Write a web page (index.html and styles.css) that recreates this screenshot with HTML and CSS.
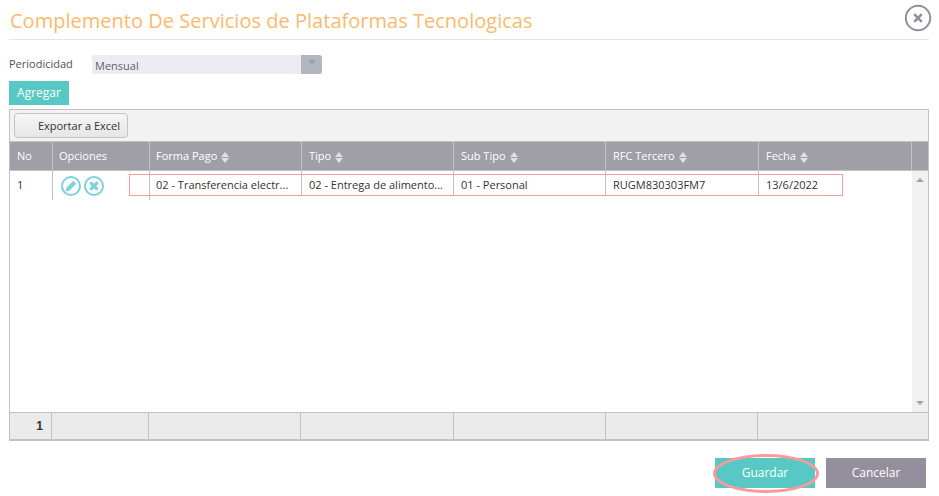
FILE: index.html
```html
<!DOCTYPE html>
<html lang="es">
<head>
<meta charset="utf-8">
<title>Complemento De Servicios de Plataformas Tecnologicas</title>
<link rel="stylesheet" href="styles.css">
</head>
<body>
<div class="dialog">
  <header class="head">
    <h1 class="title">Complemento De Servicios de Plataformas Tecnologicas</h1>
    <button class="close" aria-label="Cerrar">
      <svg width="28" height="28" viewBox="0 0 28 28"><circle cx="14" cy="14" r="12.2" fill="#fff" stroke="#928f9b" stroke-width="2"/><path d="M10.2 10.2l7.6 7.6M17.8 10.2l-7.6 7.6" stroke="#928f9b" stroke-width="2.6" fill="none"/></svg>
    </button>
  </header>
  <div class="field">
    <label class="label">Periodicidad</label>
    <div class="select"><span class="select-text">Mensual</span><span class="select-arrow"><i></i></span></div>
  </div>
  <button class="add">Agregar</button>
  <section class="grid">
    <div class="toolbar"><button class="excel">Exportar a Excel</button></div>
    <div class="row header">
      <div class="cell">No</div>
      <div class="cell tight">Opciones</div>
      <div class="cell tight">Forma Pago <span class="sort"></span></div>
      <div class="cell">Tipo <span class="sort"></span></div>
      <div class="cell">Sub Tipo <span class="sort"></span></div>
      <div class="cell">RFC Tercero <span class="sort"></span></div>
      <div class="cell">Fecha <span class="sort"></span></div>
      <div class="cell last"></div>
    </div>
    <div class="body">
      <div class="rows">
        <div class="row data">
          <div class="cell">1</div>
          <div class="cell icons">
            <svg width="20" height="20" viewBox="0 0 20 20"><circle cx="10" cy="10" r="9" fill="#fff" stroke="#7dd0dc" stroke-width="2"/><path d="M4.6 15.4l1-4 6.6-6.6 3 3-6.6 6.6z" fill="#7dd0dc"/></svg>
            <svg width="20" height="20" viewBox="0 0 20 20"><circle cx="10" cy="10" r="9" fill="#fff" stroke="#7dd0dc" stroke-width="2"/><path d="M6.4 6.4l7.2 7.2M13.6 6.4l-7.2 7.2" stroke="#7dd0dc" stroke-width="3.2" fill="none"/></svg>
          </div>
          <div class="cell tight">02 - Transferencia electr...</div>
          <div class="cell">02 - Entrega de alimento...</div>
          <div class="cell">01 - Personal</div>
          <div class="cell">RUGM830303FM7</div>
          <div class="cell">13/6/2022</div>
        </div>
        <div class="mark-row"></div>
      </div>
      <div class="scroll"><i class="up"></i><i class="down"></i></div>
    </div>
    <div class="row footer">
      <div class="cell num">1</div>
      <div class="cell"></div>
      <div class="cell"></div>
      <div class="cell"></div>
      <div class="cell"></div>
      <div class="cell"></div>
      <div class="cell last"></div>
    </div>
  </section>
  <footer class="actions">
    <button class="btn save">Guardar<span class="ring"></span></button>
    <button class="btn cancel">Cancelar</button>
  </footer>
</div>
</body>
</html>
```
FILE: styles.css
```css
* { box-sizing: border-box; }
html, body { margin: 0; padding: 0; background: #fff; }
body { font-family: "Open Sans", sans-serif; font-size: 11px; color: #333; }
button { font-family: inherit; cursor: pointer; }
.dialog { width: 939px; height: 496px; padding: 0 9px 0 9px; overflow: hidden; }
.head { height: 40px; border-bottom: 1px solid #e5e5e5; display: flex; justify-content: space-between; align-items: flex-start; width: 920px; position: relative; }
.title { margin: 7px 0 0 1px; font-size: 20px; font-weight: 400; line-height: 27px; color: #fdb96d; letter-spacing: .02px; white-space: nowrap; }
.close { position: absolute; right: -3px; top: 4px; width: 28px; height: 28px; padding: 0; border: 0; background: none; display: block; }
.close svg { display: block; }
.field { display: flex; align-items: flex-start; margin-top: 15px; height: 26px; }
.label { width: 83px; font-size: 11px; line-height: 18px; color: #5a4a66; }
.select { width: 230px; height: 19px; background: #ecedf2; border-radius: 3px; display: flex; justify-content: space-between; overflow: hidden; }
.select-text { padding: 2px 0 0 3px; line-height: 18px; font-size: 11px; color: #5f5f6b; }
.select-arrow { width: 21px; background: #b1b6c1; display: flex; justify-content: center; padding-top: 5px; }
.select-arrow i { width: 0; height: 0; border: 4px solid transparent; border-top: 5px solid #98a0ac; border-bottom: 0; }
.add { display: block; width: 60px; height: 24px; border: 0; padding: 0; background: #58c8c4; color: #fff; font-size: 12px; line-height: 22px; }
.grid { margin-top: 4px; width: 920px; height: 332px; border: 1px solid #c2c2c2; border-bottom-width: 2px; display: flex; flex-direction: column; }
.toolbar { height: 32px; background: #f2f2f2; padding: 3px 4px; border-bottom: 1px solid #c2c2c2; }
.excel { width: 114px; height: 25px; padding: 0 0 0 16px; border: 1px solid #c4c4c4; border-radius: 4px; background: linear-gradient(#f6f6f6, #e6e6e6); color: #333; font-size: 11px; line-height: 22px; white-space: nowrap; }
.row { display: grid; grid-template-columns: 43px 97px 152px 152px 152px 153px 153px 1fr; }
.cell { padding-left: 7px; white-space: nowrap; overflow: hidden; border-right: 1px solid #c2c2c2; }
.cell.tight { padding-left: 6px; }
.cell.last { border-right: 0; }
.header { height: 29px; background: #a09ea7; color: #fff; border-bottom: 1px solid #c2c2c2; font-size: 11px; line-height: 28px; }
.header .cell { display: flex; align-items: center; gap: 4px; }
.sort { display: inline-block; width: 9px; height: 11px; margin-top: 2px; position: relative; }
.sort::before, .sort::after { content: ""; position: absolute; left: 0; width: 0; height: 0; border: 4.5px solid transparent; }
.sort::before { top: 0; border-top: 0; border-bottom: 5px solid #e0e0e4; }
.sort::after { bottom: 0; border-bottom: 0; border-top: 5px solid #e0e0e4; }
.body { flex: 1; display: flex; min-height: 0; }
.rows { flex: 1; position: relative; }
.data { height: 29px; line-height: 28px; grid-template-columns: 43px 97px 152px 152px 152px 153px 153px; }
.data .cell:nth-child(n+3) { height: 25px; }
.data .cell:last-child { border-right: 0; }
.icons { display: flex; gap: 3px; align-items: flex-start; padding-top: 5px; padding-left: 8px; }
.mark-row { position: absolute; left: 119px; top: 3px; width: 714px; height: 22px; border: 1px solid #fb9c9c; pointer-events: none; }
.scroll { width: 18px; background: #f1f1f1; display: flex; flex-direction: column; justify-content: space-between; align-items: center; padding: 7px 0 7px; }
.scroll i { width: 0; height: 0; border: 4px solid transparent; }
.up { border-top: 0 !important; border-bottom: 4px solid #a5a5a5 !important; }
.down { border-bottom: 0 !important; border-top: 4px solid #a5a5a5 !important; }
.footer { height: 27px; flex: none; background: #ebebeb; border-top: 1px solid #c2c2c2; line-height: 26px; grid-template-columns: 42px 97px 152px 153px 152px 152px 1fr; }
.num { text-align: right; padding-right: 8px; padding-left: 0; font-family: "Liberation Sans", sans-serif; font-size: 12px; font-weight: 700; color: #333; }
.actions { margin-top: 17px; padding-right: 3px; display: flex; justify-content: flex-end; gap: 11px; width: 920px; }
.btn { position: relative; width: 100px; height: 30px; border: 0; padding: 0; color: #fff; font-size: 12px; line-height: 28px; }
.save { background: #58c8c4; }
.cancel { background: #948f9c; }
.ring { position: absolute; left: -2px; top: -4px; width: 106px; height: 39px; border: 3px solid #fc9a9a; border-radius: 50%; }
```
